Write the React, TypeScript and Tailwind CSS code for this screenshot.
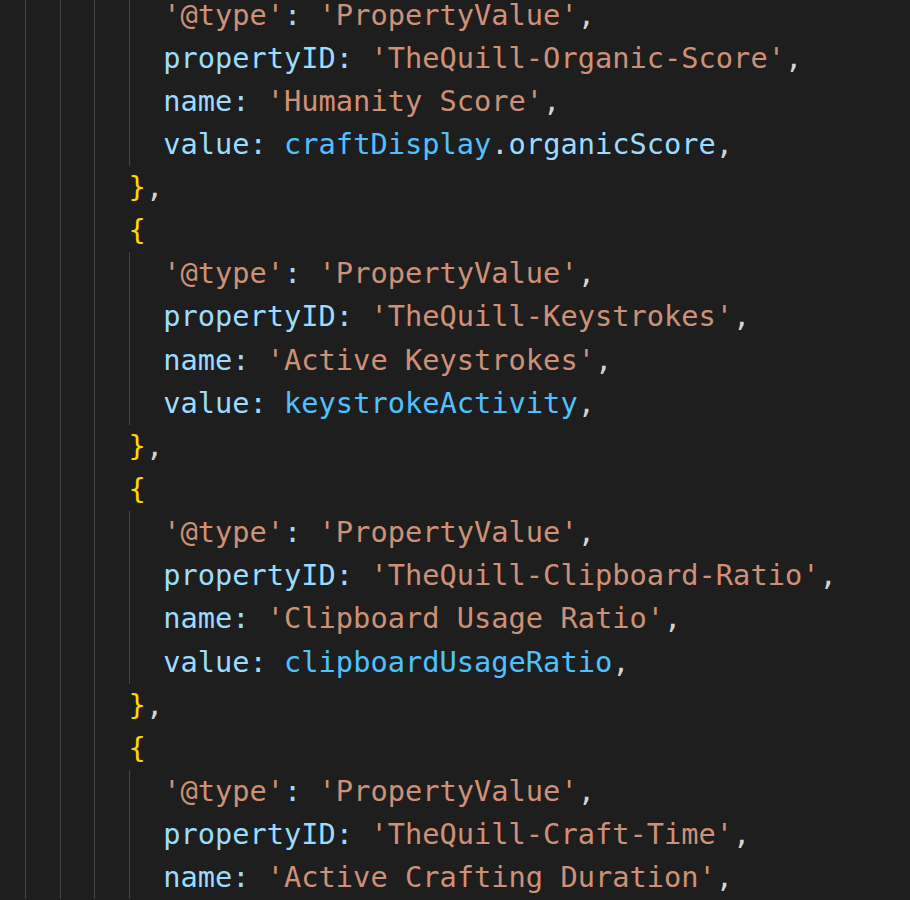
const colors = {
  s: 'text-[#ce9178]',
  k: 'text-[#9cdcfe]',
  v: 'text-[#4fc1ff]',
  p: 'text-[#d4d4d4]',
  b: 'text-[#ffd700]',
};

type Tok = [keyof typeof colors, string];
type Line = { indent: number; toks: Tok[] };

const prop = (id: string, name: string, value: Tok[]): Line[] => [
  { indent: 4, toks: [['s', "'@type'"], ['k', ':'], ['p', ' '], ['s', "'PropertyValue'"], ['p', ',']] },
  { indent: 4, toks: [['k', 'propertyID:'], ['p', ' '], ['s', `'${id}'`], ['p', ',']] },
  { indent: 4, toks: [['k', 'name:'], ['p', ' '], ['s', `'${name}'`], ['p', ',']] },
  { indent: 4, toks: [['k', 'value:'], ['p', ' '], ...value, ['p', ',']] },
];

const close: Line = { indent: 3, toks: [['b', '}'], ['p', ',']] };
const open: Line = { indent: 3, toks: [['b', '{']] };

const lines: Line[] = [
  ...prop('TheQuill-Organic-Score', 'Humanity Score', [['v', 'craftDisplay'], ['p', '.'], ['k', 'organicScore']]),
  close,
  open,
  ...prop('TheQuill-Keystrokes', 'Active Keystrokes', [['v', 'keystrokeActivity']]),
  close,
  open,
  ...prop('TheQuill-Clipboard-Ratio', 'Clipboard Usage Ratio', [['v', 'clipboardUsageRatio']]),
  close,
  open,
  ...prop('TheQuill-Craft-Time', 'Active Crafting Duration', []).slice(0, 3),
];

export default function App() {
  return (
    <div className="h-[900px] w-[910px] overflow-hidden bg-[#1e1e1e]">
      <div
        className="mt-[-6.5px] pl-[25px] text-[28.7px] leading-[43.15px]"
        style={{ fontFamily: '"DejaVu Sans Mono", "Liberation Mono", monospace' }}
      >
        {lines.map((line, i) => (
          <div key={i} className="flex h-[43.15px] whitespace-pre">
            {Array.from({ length: line.indent }).map((_, j) => (
              <span key={j} className="w-[2ch] shrink-0 border-l border-[#444444]" />
            ))}
            {line.toks.map(([t, text], j) => (
              <span key={j} className={colors[t]}>
                {text}
              </span>
            ))}
          </div>
        ))}
      </div>
    </div>
  );
}
